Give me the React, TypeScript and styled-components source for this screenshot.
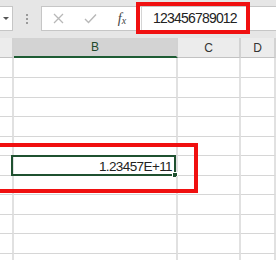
import React from 'react';
import styled, { createGlobalStyle } from 'styled-components';

const GlobalStyle = createGlobalStyle`
  html, body {
    margin: 0;
    padding: 0;
    background: #fff;
  }
`;

const COLS = [14, 164, 63];
const HEADERS = ['', 'B', 'C', 'D'];
const ROW_HEIGHTS = [20, 20, 19, 20, 19, 20, 19, 20, 19, 20, 20];
const ACTIVE_ROW = 5;

const App = () => {
  return (
    <Page>
      <GlobalStyle />
      <TopBar>
        <NameBox>
          <Caret />
        </NameBox>
        <Grip>
          <Dot />
          <Dot />
          <Dot />
        </Grip>
        <FormulaBar>
          <Buttons>
            <Btn>
              <svg width="11" height="11" viewBox="0 0 11 11">
                <path d="M1 1L10 10M10 1L1 10" stroke="#b8b8b8" strokeWidth="1.3" fill="none" />
              </svg>
            </Btn>
            <Btn>
              <svg width="13" height="11" viewBox="0 0 13 11">
                <path d="M1 6L4.5 9.5L12 1.5" stroke="#b8b8b8" strokeWidth="1.4" fill="none" />
              </svg>
            </Btn>
            <Btn>
              <Fx>
                f<sub>x</sub>
              </Fx>
            </Btn>
          </Buttons>
          <Input>123456789012</Input>
        </FormulaBar>
      </TopBar>

      <Grid>
        <HeaderRow>
          {HEADERS.map((h, i) => (
            <HeaderCell key={i} $w={COLS[i]} $active={h === 'B'}>
              {h}
            </HeaderCell>
          ))}
        </HeaderRow>
        {ROW_HEIGHTS.map((rh, r) => (
          <Row key={r} $h={rh}>
            {HEADERS.map((h, c) => (
              <Cell key={c} $w={COLS[c]}>
                {r === ACTIVE_ROW && h === 'B' && (
                  <>
                    <Value>1.23457E+11</Value>
                    <Selection>
                      <Handle />
                    </Selection>
                  </>
                )}
              </Cell>
            ))}
          </Row>
        ))}
      </Grid>

      <Callout $x={136} $y={2} $w={114} $h={32} />
      <Callout $x={-10} $y={143} $w={208} $h={50} />
    </Page>
  );
};

export default App;

const Page = styled.div`
  position: relative;
  width: 276px;
  height: 260px;
  overflow: hidden;
  background: #fff;
  font-family: 'Liberation Sans', Arial, sans-serif;
`;

const TopBar = styled.div`
  display: flex;
  align-items: flex-start;
  height: 38px;
  padding-top: 6px;
  box-sizing: border-box;
  background: #e6e6e6;
`;

const NameBox = styled.div`
  display: flex;
  align-items: center;
  width: 13px;
  height: 25px;
  padding-left: 3px;
  box-sizing: border-box;
  background: #fff;
  border: 1px solid #c6c6c6;
  border-left: none;
`;

const Caret = styled.div`
  width: 0;
  height: 0;
  border-left: 3px solid transparent;
  border-right: 3px solid transparent;
  border-top: 3px solid #555;
`;

const Grip = styled.div`
  display: flex;
  flex-direction: column;
  align-items: center;
  justify-content: center;
  gap: 2px;
  width: 28px;
  height: 25px;
`;

const Dot = styled.div`
  width: 2px;
  height: 2px;
  background: #9a9a9a;
`;

const FormulaBar = styled.div`
  display: flex;
  flex: 1;
  height: 25px;
  box-sizing: border-box;
  background: #fff;
  border: 1px solid #c6c6c6;
  border-right: none;
`;

const Buttons = styled.div`
  display: flex;
  width: 99px;
`;

const Btn = styled.div`
  display: flex;
  align-items: center;
  justify-content: center;
  width: 32px;
`;

const Fx = styled.span`
  font-family: 'Liberation Serif', 'Times New Roman', serif;
  font-style: italic;
  font-size: 14px;
  color: #444;

  sub {
    font-size: 10px;
    vertical-align: -1px;
  }
`;

const Input = styled.div`
  flex: 1;
  border-left: 1px solid #d4d4d4;
  padding-left: 11px;
  font-size: 14px;
  line-height: 23px;
  letter-spacing: -0.8px;
  color: #222;
`;

const Grid = styled.div`
  display: flex;
  flex-direction: column;
`;

const HeaderRow = styled.div`
  display: flex;
  height: 20px;
  background: #ececec;
`;

const HeaderCell = styled.div<{ $w?: number; $active?: boolean }>`
  display: flex;
  align-items: center;
  justify-content: center;
  ${(p) => (p.$w ? `width: ${p.$w}px;` : 'flex: 1;')}
  box-sizing: border-box;
  background: ${(p) => (p.$active ? '#d3d3d3' : '#ececec')};
  border-right: 2px solid #d2d2d2;
  border-bottom: ${(p) => (p.$active ? '2px solid #1e5c34' : '1px solid #c2c2c2')};
  font-size: 12px;
  color: ${(p) => (p.$active ? '#1f4a2c' : '#333')};
`;

const Row = styled.div<{ $h: number }>`
  display: flex;
  height: ${(p) => p.$h}px;
`;

const Cell = styled.div<{ $w?: number }>`
  position: relative;
  display: flex;
  align-items: center;
  justify-content: flex-end;
  ${(p) => (p.$w ? `width: ${p.$w}px;` : 'flex: 1;')}
  box-sizing: border-box;
  border-right: 2px solid #e1e1e1;
  border-bottom: 1px solid #d6d6d6;
`;

const Value = styled.span`
  padding: 2px 4px 0 0;
  font-size: 13.5px;
  letter-spacing: -0.6px;
  color: #222;
`;

const Selection = styled.div`
  position: absolute;
  top: -1px;
  left: -3px;
  right: 0;
  bottom: -1px;
  border: 2px solid #1f5130;
`;

const Handle = styled.div`
  position: absolute;
  right: -4px;
  bottom: -4px;
  width: 4px;
  height: 4px;
  background: #1f5130;
  border: 1px solid #fff;
`;

const Callout = styled.div<{ $x: number; $y: number; $w: number; $h: number }>`
  position: absolute;
  left: ${(p) => p.$x}px;
  top: ${(p) => p.$y}px;
  width: ${(p) => p.$w}px;
  height: ${(p) => p.$h}px;
  box-sizing: border-box;
  border: 4px solid #f01010;
`;
